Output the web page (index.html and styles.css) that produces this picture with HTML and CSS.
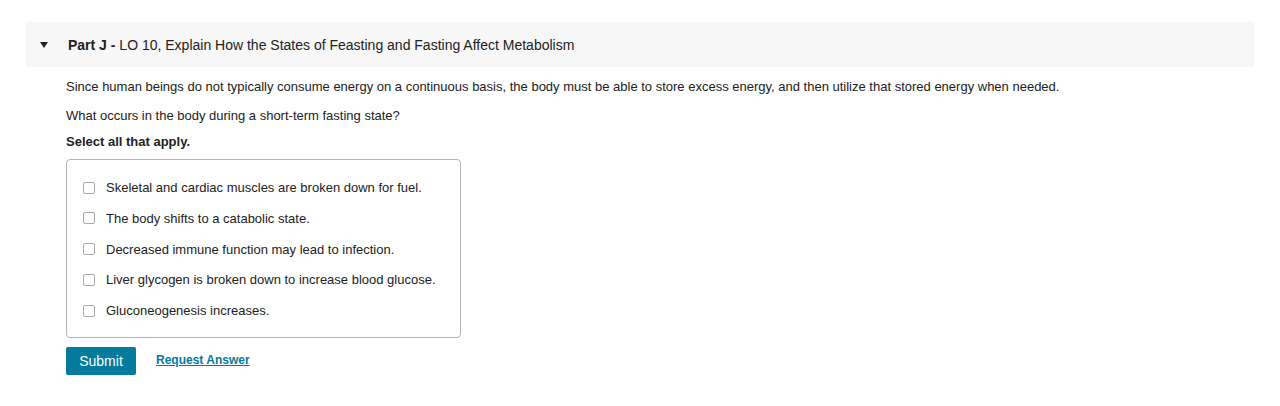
FILE: index.html
```html
<!DOCTYPE html>
<html>
<head>
<meta charset="utf-8">
<link rel="stylesheet" href="styles.css">
</head>
<body>
<div class="part">
  <div class="part-head">
    <span class="caret"></span>
    <span class="title"><b>Part J -</b> LO 10, Explain How the States of Feasting and Fasting Affect Metabolism</span>
  </div>
  <div class="part-body">
    <p class="intro">Since human beings do not typically consume energy on a continuous basis, the body must be able to store excess energy, and then utilize that stored energy when needed.</p>
    <p class="question">What occurs in the body during a short-term fasting state?</p>
    <p class="instr">Select all that apply.</p>
    <div class="choices">
      <label class="choice"><span class="box"></span>Skeletal and cardiac muscles are broken down for fuel.</label>
      <label class="choice"><span class="box"></span>The body shifts to a catabolic state.</label>
      <label class="choice"><span class="box"></span>Decreased immune function may lead to infection.</label>
      <label class="choice"><span class="box"></span>Liver glycogen is broken down to increase blood glucose.</label>
      <label class="choice"><span class="box"></span>Gluconeogenesis increases.</label>
    </div>
    <div class="actions">
      <button class="submit">Submit</button>
      <a class="request" href="#">Request Answer</a>
    </div>
  </div>
</div>
</body>
</html>
```
FILE: styles.css
```css
html, body { margin: 0; padding: 0; background: #fff; }
body {
  font-family: "Liberation Sans", Arial, Helvetica, sans-serif;
  color: #222;
  padding: 22px 26px 0 26px;
}
.part-head {
  background: #f7f7f7;
  height: 45px;
  display: flex;
  align-items: center;
  padding-left: 14px;
}
.caret {
  width: 0; height: 0;
  border-left: 4.5px solid transparent;
  border-right: 4.5px solid transparent;
  border-top: 6px solid #222;
  margin-right: 20px;
  margin-top: 1px;
}
.title { font-size: 14px; line-height: 16px; color: #222; padding-top: 1px; }
.title b { font-weight: bold; }
.part-body { padding-left: 40px; }
.part-body p { margin: 0; font-size: 13px; line-height: 15px; }
.intro { padding-top: 12px; }
.question { padding-top: 14px; }
.instr { padding-top: 11px; font-weight: bold; }
.choices {
  margin-top: 10px;
  border: 1px solid #b4b4b4;
  border-radius: 4px;
  box-sizing: border-box;
  width: 395px;
  height: 179px;
  padding: 20px 0 0 16px;
  display: flex;
  flex-direction: column;
  gap: 15.75px;
}
.choice {
  display: flex;
  align-items: center;
  font-size: 13px;
  line-height: 15px;
  color: #222;
}
.box {
  width: 10px; height: 10px;
  border: 1px solid #a8a8a8;
  border-radius: 2px;
  margin-right: 11px;
  background: #fff;
  flex: none;
}
.actions {
  margin-top: 9px;
  display: flex;
  align-items: center;
  gap: 20px;
}
.submit {
  background: #047a9c;
  color: #fff;
  border: 0;
  border-radius: 2px;
  font-family: "Liberation Sans", Arial, sans-serif;
  font-size: 14px;
  font-weight: normal;
  width: 70px;
  height: 28px;
  padding: 0;
}
.request {
  color: #047a9c;
  font-size: 12px;
  font-weight: bold;
  text-decoration: underline;
  margin-top: -3px;
}
```
